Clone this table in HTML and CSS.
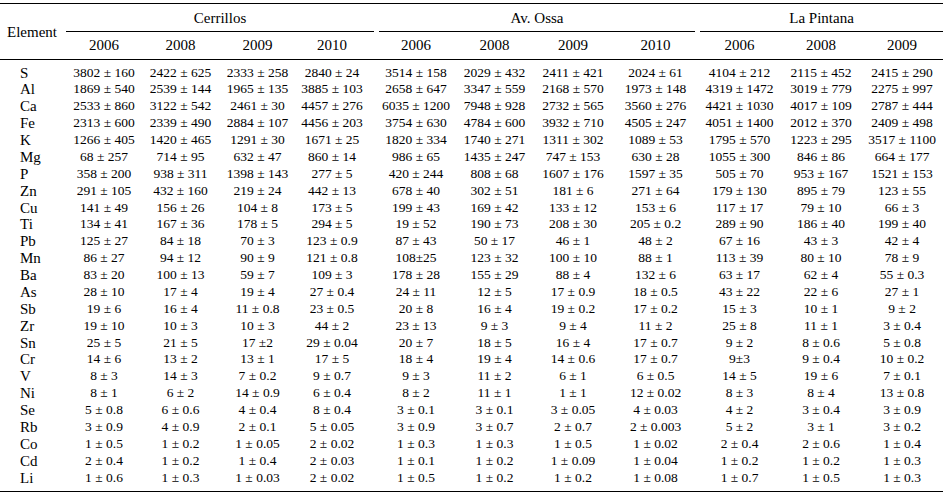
FILE: index.html
```html
<!DOCTYPE html>
<html lang="en">
<head>
<meta charset="utf-8">
<title>Element concentrations</title>
<link rel="stylesheet" href="styles.css">
</head>
<body>
<table class="tbl">
<colgroup>
<col class="w66"><col class="w76"><col class="w77"><col class="w77"><col class="w80">
<col class="w80"><col class="w77"><col class="w80"><col class="w85">
<col class="w83"><col class="w80"><col class="w82">
</colgroup>
<thead>
<tr class="grp-row">
<th rowspan="2" class="el-head">Element</th>
<th colspan="4" class="grp"><div class="grp-label g1">Cerrillos</div></th>
<th colspan="4" class="grp"><div class="grp-label g2">Av. Ossa</div></th>
<th colspan="3" class="grp"><div class="grp-label g3">La Pintana</div></th>
</tr>
<tr class="year-row">
<th>2006</th><th>2008</th><th>2009</th><th class="c4">2010</th>
<th>2006</th><th>2008</th><th>2009</th><th>2010</th>
<th>2006</th><th>2008</th><th>2009</th>
</tr>
</thead>
<tbody>
<tr><td class="name">S</td><td>3802 ± 160</td><td>2422 ± 625</td><td>2333 ± 258</td><td class="c4">2840 ± 24</td><td>3514 ± 158</td><td>2029 ± 432</td><td>2411 ± 421</td><td>2024 ± 61</td><td>4104 ± 212</td><td>2115 ± 452</td><td>2415 ± 290</td></tr>
<tr><td class="name">Al</td><td>1869 ± 540</td><td>2539 ± 144</td><td>1965 ± 135</td><td class="c4">3885 ± 103</td><td>2658 ± 647</td><td>3347 ± 559</td><td>2168 ± 570</td><td>1973 ± 148</td><td>4319 ± 1472</td><td>3019 ± 779</td><td>2275 ± 997</td></tr>
<tr><td class="name">Ca</td><td>2533 ± 860</td><td>3122 ± 542</td><td>2461 ± 30</td><td class="c4">4457 ± 276</td><td>6035 ± 1200</td><td>7948 ± 928</td><td>2732 ± 565</td><td>3560 ± 276</td><td>4421 ± 1030</td><td>4017 ± 109</td><td>2787 ± 444</td></tr>
<tr><td class="name">Fe</td><td>2313 ± 600</td><td>2339 ± 490</td><td>2884 ± 107</td><td class="c4">4456 ± 203</td><td>3754 ± 630</td><td>4784 ± 600</td><td>3932 ± 710</td><td>4505 ± 247</td><td>4051 ± 1400</td><td>2012 ± 370</td><td>2409 ± 498</td></tr>
<tr><td class="name">K</td><td>1266 ± 405</td><td>1420 ± 465</td><td>1291 ± 30</td><td class="c4">1671 ± 25</td><td>1820 ± 334</td><td>1740 ± 271</td><td>1311 ± 302</td><td>1089 ± 53</td><td>1795 ± 570</td><td>1223 ± 295</td><td>3517 ± 1100</td></tr>
<tr><td class="name">Mg</td><td>68 ± 257</td><td>714 ± 95</td><td>632 ± 47</td><td class="c4">860 ± 14</td><td>986 ± 65</td><td>1435 ± 247</td><td>747 ± 153</td><td>630 ± 28</td><td>1055 ± 300</td><td>846 ± 86</td><td>664 ± 177</td></tr>
<tr><td class="name">P</td><td>358 ± 200</td><td>938 ± 311</td><td>1398 ± 143</td><td class="c4">277 ± 5</td><td>420 ± 244</td><td>808 ± 68</td><td>1607 ± 176</td><td>1597 ± 35</td><td>505 ± 70</td><td>953 ± 167</td><td>1521 ± 153</td></tr>
<tr><td class="name">Zn</td><td>291 ± 105</td><td>432 ± 160</td><td>219 ± 24</td><td class="c4">442 ± 13</td><td>678 ± 40</td><td>302 ± 51</td><td>181 ± 6</td><td>271 ± 64</td><td>179 ± 130</td><td>895 ± 79</td><td>123 ± 55</td></tr>
<tr><td class="name">Cu</td><td>141 ± 49</td><td>156 ± 26</td><td>104 ± 8</td><td class="c4">173 ± 5</td><td>199 ± 43</td><td>169 ± 42</td><td>133 ± 12</td><td>153 ± 6</td><td>117 ± 17</td><td>79 ± 10</td><td>66 ± 3</td></tr>
<tr><td class="name">Ti</td><td>134 ± 41</td><td>167 ± 36</td><td>178 ± 5</td><td class="c4">294 ± 5</td><td>19 ± 52</td><td>190 ± 73</td><td>208 ± 30</td><td>205 ± 0.2</td><td>289 ± 90</td><td>186 ± 40</td><td>199 ± 40</td></tr>
<tr><td class="name">Pb</td><td>125 ± 27</td><td>84 ± 18</td><td>70 ± 3</td><td class="c4">123 ± 0.9</td><td>87 ± 43</td><td>50 ± 17</td><td>46 ± 1</td><td>48 ± 2</td><td>67 ± 16</td><td>43 ± 3</td><td>42 ± 4</td></tr>
<tr><td class="name">Mn</td><td>86 ± 27</td><td>94 ± 12</td><td>90 ± 9</td><td class="c4">121 ± 0.8</td><td>108±25</td><td>123 ± 32</td><td>100 ± 10</td><td>88 ± 1</td><td>113 ± 39</td><td>80 ± 10</td><td>78 ± 9</td></tr>
<tr><td class="name">Ba</td><td>83 ± 20</td><td>100 ± 13</td><td>59 ± 7</td><td class="c4">109 ± 3</td><td>178 ± 28</td><td>155 ± 29</td><td>88 ± 4</td><td>132 ± 6</td><td>63 ± 17</td><td>62 ± 4</td><td>55 ± 0.3</td></tr>
<tr><td class="name">As</td><td>28 ± 10</td><td>17 ± 4</td><td>19 ± 4</td><td class="c4">27 ± 0.4</td><td>24 ± 11</td><td>12 ± 5</td><td>17 ± 0.9</td><td>18 ± 0.5</td><td>43 ± 22</td><td>22 ± 6</td><td>27 ± 1</td></tr>
<tr><td class="name">Sb</td><td>19 ± 6</td><td>16 ± 4</td><td>11 ± 0.8</td><td class="c4">23 ± 0.5</td><td>20 ± 8</td><td>16 ± 4</td><td>19 ± 0.2</td><td>17 ± 0.2</td><td>15 ± 3</td><td>10 ± 1</td><td>9 ± 2</td></tr>
<tr><td class="name">Zr</td><td>19 ± 10</td><td>10 ± 3</td><td>10 ± 3</td><td class="c4">44 ± 2</td><td>23 ± 13</td><td>9 ± 3</td><td>9 ± 4</td><td>11 ± 2</td><td>25 ± 8</td><td>11 ± 1</td><td>3 ± 0.4</td></tr>
<tr><td class="name">Sn</td><td>25 ± 5</td><td>21 ± 5</td><td>17 ±2</td><td class="c4">29 ± 0.04</td><td>20 ± 7</td><td>18 ± 5</td><td>16 ± 4</td><td>17 ± 0.7</td><td>9 ± 2</td><td>8 ± 0.6</td><td>5 ± 0.8</td></tr>
<tr><td class="name">Cr</td><td>14 ± 6</td><td>13 ± 2</td><td>13 ± 1</td><td class="c4">17 ± 5</td><td>18 ± 4</td><td>19 ± 4</td><td>14 ± 0.6</td><td>17 ± 0.7</td><td>9±3</td><td>9 ± 0.4</td><td>10 ± 0.2</td></tr>
<tr><td class="name">V</td><td>8 ± 3</td><td>14 ± 3</td><td>7 ± 0.2</td><td class="c4">9 ± 0.7</td><td>9 ± 3</td><td>11 ± 2</td><td>6 ± 1</td><td>6 ± 0.5</td><td>14 ± 5</td><td>19 ± 6</td><td>7 ± 0.1</td></tr>
<tr><td class="name">Ni</td><td>8 ± 1</td><td>6 ± 2</td><td>14 ± 0.9</td><td class="c4">6 ± 0.4</td><td>8 ± 2</td><td>11 ± 1</td><td>1 ± 1</td><td>12 ± 0.02</td><td>8 ± 3</td><td>8 ± 4</td><td>13 ± 0.8</td></tr>
<tr><td class="name">Se</td><td>5 ± 0.8</td><td>6 ± 0.6</td><td>4 ± 0.4</td><td class="c4">8 ± 0.4</td><td>3 ± 0.1</td><td>3 ± 0.1</td><td>3 ± 0.05</td><td>4 ± 0.03</td><td>4 ± 2</td><td>3 ± 0.4</td><td>3 ± 0.9</td></tr>
<tr><td class="name">Rb</td><td>3 ± 0.9</td><td>4 ± 0.9</td><td>2 ± 0.1</td><td class="c4">5 ± 0.05</td><td>3 ± 0.9</td><td>3 ± 0.7</td><td>2 ± 0.7</td><td>2 ± 0.003</td><td>5 ± 2</td><td>3 ± 1</td><td>3 ± 0.2</td></tr>
<tr><td class="name">Co</td><td>1 ± 0.5</td><td>1 ± 0.2</td><td>1 ± 0.05</td><td class="c4">2 ± 0.02</td><td>1 ± 0.3</td><td>1 ± 0.3</td><td>1 ± 0.5</td><td>1 ± 0.02</td><td>2 ± 0.4</td><td>2 ± 0.6</td><td>1 ± 0.4</td></tr>
<tr><td class="name">Cd</td><td>2 ± 0.4</td><td>1 ± 0.2</td><td>1 ± 0.4</td><td class="c4">2 ± 0.03</td><td>1 ± 0.1</td><td>1 ± 0.2</td><td>1 ± 0.09</td><td>1 ± 0.04</td><td>1 ± 0.2</td><td>1 ± 0.2</td><td>1 ± 0.3</td></tr>
<tr><td class="name">Li</td><td>1 ± 0.6</td><td>1 ± 0.3</td><td>1 ± 0.03</td><td class="c4">2 ± 0.02</td><td>1 ± 0.5</td><td>1 ± 0.2</td><td>1 ± 0.2</td><td>1 ± 0.08</td><td>1 ± 0.7</td><td>1 ± 0.5</td><td>1 ± 0.3</td></tr>
</tbody>
</table>
</body>
</html>
```

FILE: styles.css
```css
html, body {
  margin: 0;
  padding: 0;
  background: #fff;
}
body {
  padding-top: 3px;
  font-family: "Liberation Serif", "Times New Roman", serif;
  color: #000;
}
.tbl {
  width: 943px;
  table-layout: fixed;
  border-collapse: separate;
  border-spacing: 0;
  border-top: 1px solid #000;
  border-bottom: 1px solid #000;
}
.w66 { width: 66px; }
.w76 { width: 76px; }
.w77 { width: 77px; }
.w80 { width: 80px; }
.w82 { width: 82px; }
.w83 { width: 83px; }
.w85 { width: 85px; }

th {
  font-weight: normal;
  font-size: 15px;
  line-height: 17px;
  padding: 0;
}
.el-head {
  text-align: left;
  padding: 2px 0 0 7px;
  vertical-align: middle;
  border-bottom: 1px solid #000;
}
.grp {
  padding: 0;
}
.grp-label {
  padding: 6px 0 4px;
  border-bottom: 1px solid #000;
  text-align: center;
}
.g1 { margin: 0 2px 0 0; }
.g2 { margin: 0 3px 0 3px; }
.g3 { margin: 0 0 0 2px; }
.year-row th {
  padding: 5px 0;
  text-align: center;
  border-bottom: 1px solid #000;
}
.year-row th.c4 { padding-right: 8px; }

td {
  font-size: 13.5px;
  line-height: 16.875px;
  padding: 0;
  text-align: center;
  white-space: nowrap;
}
td.c4 { padding-right: 8px; }
td.name {
  text-align: left;
  padding-left: 20px;
  font-size: 15px;
}
tbody tr:first-child td { padding-top: 4.5px; }
tbody tr:last-child td { padding-bottom: 5px; }
```
